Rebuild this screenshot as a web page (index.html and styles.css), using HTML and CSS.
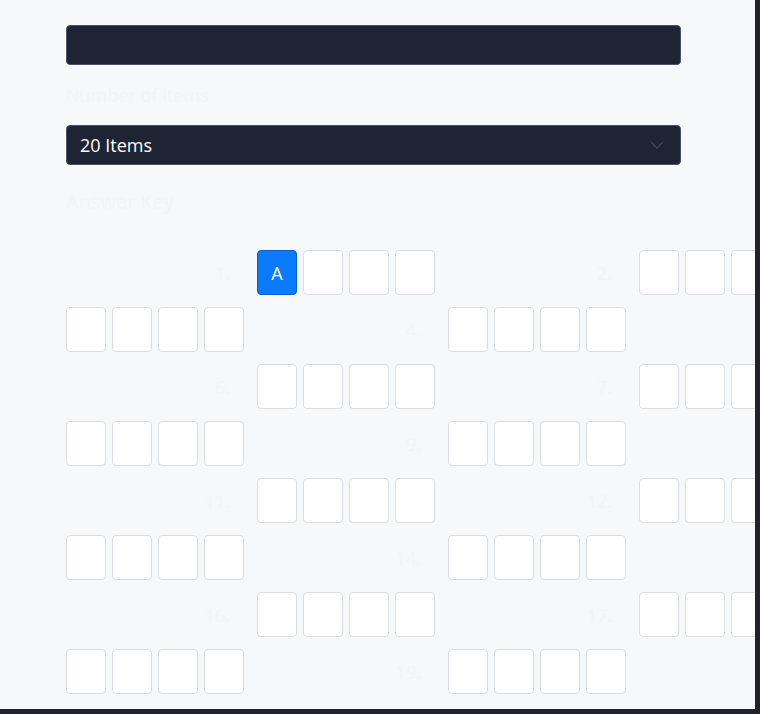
FILE: index.html
```html
<!DOCTYPE html>
<html lang="en">
<head>
<meta charset="utf-8">
<title>Answer Sheet</title>
<link rel="stylesheet" href="styles.css">
</head>
<body>
<div class="app">
  <div class="content">
    <div class="text-input"></div>
    <label class="field-label">Number of Items</label>
    <div class="select">
      <span class="select-value">20 Items</span>
      <svg class="chevron" width="14" height="8" viewBox="0 0 14 8"><path d="M1 1l6 6 6-6" fill="none" stroke="#3a4254" stroke-width="1.5"/></svg>
    </div>
    <h2 class="section-title">Answer Key</h2>
    <div class="grid">
      <div class="num">1.</div>
      <div class="choices"><button class="choice active">A</button><button class="choice"></button><button class="choice"></button><button class="choice"></button></div>
      <div class="num">2.</div>
      <div class="choices"><button class="choice"></button><button class="choice"></button><button class="choice"></button><button class="choice"></button></div>
      <div class="num">3.</div>
      <div class="choices"><button class="choice"></button><button class="choice"></button><button class="choice"></button><button class="choice"></button></div>
      <div class="num">4.</div>
      <div class="choices"><button class="choice"></button><button class="choice"></button><button class="choice"></button><button class="choice"></button></div>
      <div class="num">5.</div>
      <div class="choices"><button class="choice"></button><button class="choice"></button><button class="choice"></button><button class="choice"></button></div>
      <div class="num">6.</div>
      <div class="choices"><button class="choice"></button><button class="choice"></button><button class="choice"></button><button class="choice"></button></div>
      <div class="num">7.</div>
      <div class="choices"><button class="choice"></button><button class="choice"></button><button class="choice"></button><button class="choice"></button></div>
      <div class="num">8.</div>
      <div class="choices"><button class="choice"></button><button class="choice"></button><button class="choice"></button><button class="choice"></button></div>
      <div class="num">9.</div>
      <div class="choices"><button class="choice"></button><button class="choice"></button><button class="choice"></button><button class="choice"></button></div>
      <div class="num">10.</div>
      <div class="choices"><button class="choice"></button><button class="choice"></button><button class="choice"></button><button class="choice"></button></div>
      <div class="num">11.</div>
      <div class="choices"><button class="choice"></button><button class="choice"></button><button class="choice"></button><button class="choice"></button></div>
      <div class="num">12.</div>
      <div class="choices"><button class="choice"></button><button class="choice"></button><button class="choice"></button><button class="choice"></button></div>
      <div class="num">13.</div>
      <div class="choices"><button class="choice"></button><button class="choice"></button><button class="choice"></button><button class="choice"></button></div>
      <div class="num">14.</div>
      <div class="choices"><button class="choice"></button><button class="choice"></button><button class="choice"></button><button class="choice"></button></div>
      <div class="num">15.</div>
      <div class="choices"><button class="choice"></button><button class="choice"></button><button class="choice"></button><button class="choice"></button></div>
      <div class="num">16.</div>
      <div class="choices"><button class="choice"></button><button class="choice"></button><button class="choice"></button><button class="choice"></button></div>
      <div class="num">17.</div>
      <div class="choices"><button class="choice"></button><button class="choice"></button><button class="choice"></button><button class="choice"></button></div>
      <div class="num">18.</div>
      <div class="choices"><button class="choice"></button><button class="choice"></button><button class="choice"></button><button class="choice"></button></div>
      <div class="num">19.</div>
      <div class="choices"><button class="choice"></button><button class="choice"></button><button class="choice"></button><button class="choice"></button></div>
      <div class="num">20.</div>
      <div class="choices"><button class="choice"></button><button class="choice"></button><button class="choice"></button><button class="choice"></button></div>
    </div>
  </div>
</div>
</body>
</html>
```
FILE: styles.css
```css
html, body {
  margin: 0;
  padding: 0;
  background: #1e2332;
  height: 714px;
  overflow: hidden;
}
.app {
  width: 755px;
  height: 709px;
  background: #f7f8fa;
  overflow: hidden;
  font-family: "Open Sans", "DejaVu Sans", sans-serif;
}
.content {
  padding: 25px 0 0 66px;
}
.text-input {
  box-sizing: border-box;
  width: 615px;
  height: 40px;
  background: #1e2433;
  border: 1px solid #4b5266;
  border-radius: 4px;
}
.field-label {
  display: block;
  margin: 18px 0 17px;
  font-size: 18px;
  line-height: 25px;
  color: #f4f5f8;
}
.select {
  box-sizing: border-box;
  width: 615px;
  height: 40px;
  background: #1e2433;
  border: 1px solid #4b5266;
  border-radius: 4px;
  display: flex;
  align-items: center;
  justify-content: space-between;
  padding: 0 16px 0 13px;
}
.select-value {
  color: #ffffff;
  font-size: 18px;
}
.chevron {
  display: block;
}
.section-title {
  margin: 23px 0 35px;
  font-size: 20px;
  line-height: 27px;
  font-weight: 400;
  color: #f4f5f8;
}
.grid {
  display: grid;
  grid-template-columns: repeat(5, 178px);
  column-gap: 13px;
  row-gap: 12px;
  width: 942px;
}
.num {
  display: flex;
  align-items: center;
  justify-content: flex-end;
  padding-right: 14px;
  font-size: 18px;
  color: #f3f5f9;
}
.choices {
  display: flex;
  gap: 6px;
}
.choice {
  box-sizing: border-box;
  width: 40px;
  height: 45px;
  padding: 0;
  background: #ffffff;
  border: 1px solid #dcdde0;
  border-radius: 4px;
  font-family: "Open Sans", "DejaVu Sans", sans-serif;
  font-size: 18px;
  color: #ffffff;
}
.choice.active {
  background: #0a7bff;
  border-color: #0c5fc9;
}
```
